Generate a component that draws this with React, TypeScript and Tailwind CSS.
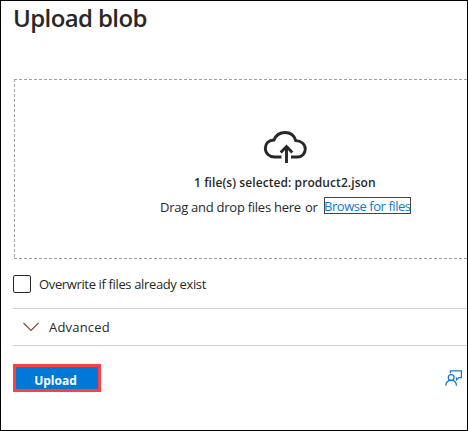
import React from "react";

function CloudUploadIcon() {
  return (
    <svg width="44" height="34" viewBox="0 0 44 34" fill="none" stroke="#292827" strokeWidth="2.9" className="block">
      <path d="M18.5 27H11.4C6.3 27 2.3 23.2 2.3 18.3C2.3 13.4 5.9 10 11 10C12.8 5.5 17.1 2.5 22 2.5C27.2 2.5 31.3 5.7 32.8 10.6C38 10.6 42.3 14.2 42.3 19.1C42.3 23.4 38.9 27 34.4 27H28" />
      <path d="M23.5 33V16.7M17.7 22.4L23.5 16.5L29.3 22.4" />
    </svg>
  );
}

function FeedbackIcon() {
  return (
    <svg width="18" height="17" viewBox="0 0 18 17" fill="none" stroke="#1479cf" strokeWidth="1.25" className="block">
      <path d="M5.3 3.3V.9H16.4V7.5H13.9L11.5 9.8V7.5" />
      <circle cx="6.2" cy="7.4" r="2.9" />
      <path d="M.8 15.8C1 12.5 3.2 10.4 6.2 10.4S11.3 12.5 11.5 15.8" />
    </svg>
  );
}

function DashedRule() {
  return <div className="h-px shrink-0 bg-[repeating-linear-gradient(to_right,#a0a0a0_0_3px,transparent_3px_5px)]" />;
}

export default function App() {
  return (
    <main className="flex h-[431px] w-[468px] flex-col overflow-hidden border border-black bg-white pl-3 font-['Open_Sans','Noto_Sans',sans-serif] text-[13px] leading-5 text-[#292827]">
      <h1 className="h-[78px] whitespace-nowrap pt-px text-2xl font-semibold leading-8 tracking-[-0.6px]">Upload blob</h1>
      <section className="ml-px flex h-[180px] shrink-0 flex-col">
        <DashedRule />
        <div className="flex h-[178px]">
          <div className="w-px bg-[repeating-linear-gradient(to_bottom,#a0a0a0_0_2px,transparent_2px_4px,#a0a0a0_4px_5px)]" />
          <div className="flex-1">
            <div className="ml-[248px] mt-[50px]"><CloudUploadIcon /></div>
            <p className="ml-[179px] mt-[11px] whitespace-nowrap text-xs font-semibold tracking-[0.08px]">1 file(s) selected: product2.json</p>
            <div className="ml-[145px] mt-[5px] flex items-start whitespace-nowrap">
              <span className="w-[145px] pt-px tracking-[-0.26px]">Drag and drop files here</span>
              <span className="w-[19px] pt-px tracking-[-0.3px]">or</span>
              <a className="mt-px flex h-[17px] w-[87px] items-center border border-[#444] tracking-[-0.45px] text-[#1079d0]"><span className="-ml-px">Browse for files</span></a>
            </div>
          </div>
        </div>
        <DashedRule />
      </section>
      <label className="mt-4 flex h-[18px] shrink-0 items-center gap-2 whitespace-nowrap">
        <span className="h-[18px] w-[18px] rounded-[2px] border border-[#292827]" />
        <span className="tracking-[-0.36px]">Overwrite if files already exist</span>
      </label>
      <div className="mt-[15px] flex h-[38px] shrink-0 items-center border-y border-[#d2d2d2]">
        <svg width="16" height="10" viewBox="0 0 16 10" fill="none" stroke="#74513e" strokeWidth="1.2" className="ml-[10px]">
          <path d="m.5 1 7.5 7.5L15.5 1" />
        </svg>
        <span className="ml-[10px] text-[13px] tracking-[0.2px]">Advanced</span>
      </div>
      <footer className="mt-[18px] flex items-start">
        <button className="h-7 w-[88px] border-[3px] border-[#fc4141] bg-[#0078d7] pr-[3px] pt-[5px] text-xs font-bold leading-[18px] text-white">Upload</button>
        <div className="ml-[344px] mt-[6px]"><FeedbackIcon /></div>
      </footer>
    </main>
  );
}
